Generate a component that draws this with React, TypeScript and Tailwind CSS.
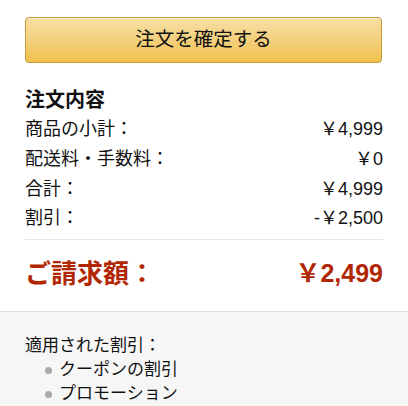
import React from 'react';

const rows = [
  { label: '商品の小計：', value: '￥4,999' },
  { label: '配送料・手数料：', value: '￥0' },
  { label: '合計：', value: '￥4,999' },
  { label: '割引：', value: '-￥2,500' },
];

const discounts = ['クーポンの割引', 'プロモーション'];

export default function App() {
  return (
    <div
      className="w-[408px] h-[406px] overflow-hidden bg-white text-[#111]"
      style={{ fontFamily: '"Liberation Sans", "Noto Sans CJK JP", sans-serif' }}
    >
      <div className="px-[25px] pt-[17px]">
        {/* 注文確定ボタン */}
        <button className="w-[357px] h-[46px] rounded-[4px] border border-[#c49a3a] bg-gradient-to-b from-[#f7dfa5] to-[#f0c14b] text-[19.5px] text-[#111] flex items-center justify-center shadow-[inset_0_1px_0_rgba(255,255,255,0.4)]">
          注文を確定する
        </button>

        {/* 注文内容 */}
        <h3 className="mt-[24px] text-[20px] font-bold leading-[26px]">注文内容</h3>
        <div className="mt-[2px]">
          {rows.map((r) => (
            <div key={r.label} className="flex justify-between text-[18px] leading-[29.75px]">
              <span>{r.label}</span>
              <span>{r.value}</span>
            </div>
          ))}
        </div>
        <div className="mt-[5px] border-t border-[#e7e7e7]" />

        <div className="mt-[18px] flex items-center justify-between h-[32px] font-bold text-[#b12704]">
          <span className="text-[26px]">ご請求額：</span>
          <span className="text-[25px]">￥2,499</span>
        </div>
      </div>

      {/* 適用された割引 */}
      <div className="mt-[21px] border-t border-[#dddddd] bg-[#f6f6f6] px-[25px] pt-[22px] h-[120px]">
        <div className="text-[17px] leading-[24px]">適用された割引：</div>
        <ul className="pl-[20px]">
          {discounts.map((d) => (
            <li key={d} className="flex items-center text-[17px] leading-[24px]">
              <span className="w-[7px] h-[7px] rounded-full bg-[#aaaaaa] mr-[7px]" />
              {d}
            </li>
          ))}
        </ul>
      </div>
    </div>
  );
}
